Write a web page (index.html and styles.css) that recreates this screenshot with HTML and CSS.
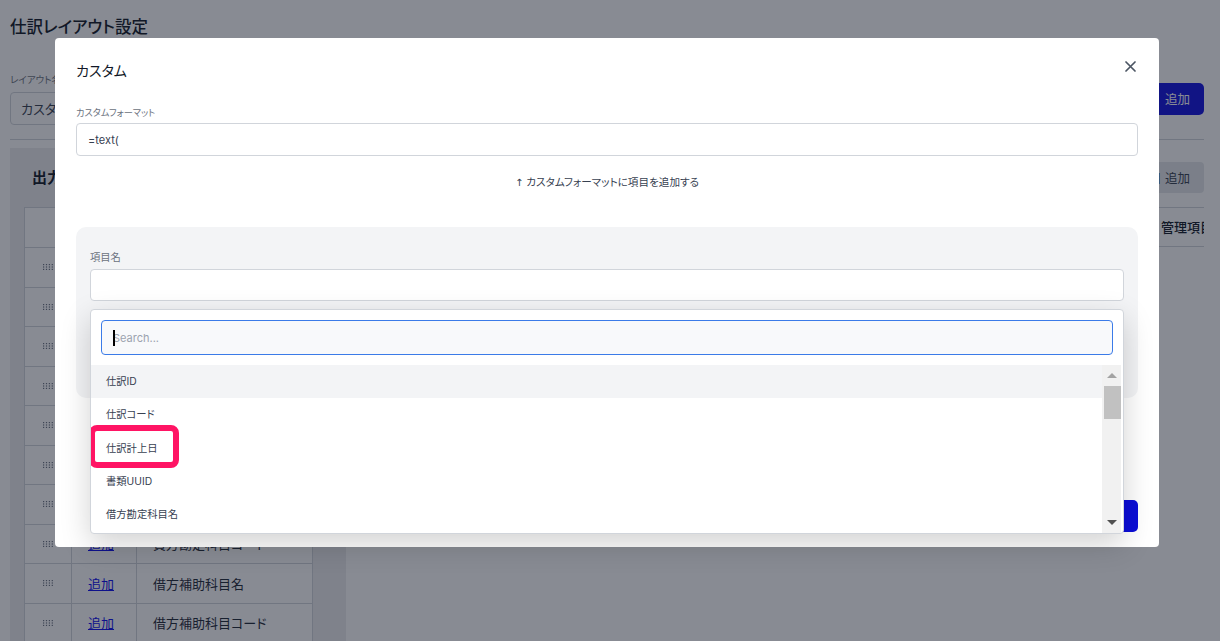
FILE: index.html
```html
<!DOCTYPE html>
<html lang="ja">
<head>
<meta charset="utf-8">
<title>仕訳レイアウト設定</title>
<link rel="stylesheet" href="styles.css">
</head>
<body>
<div class="page">
  <h1 class="page-title">仕訳レイアウト設定</h1>
  <div class="layout-row">
    <div class="layout-field">
      <label class="page-label">レイアウト名</label>
      <input class="page-input" value="カスタムレイアウト">
    </div>
    <button class="btn-primary">追加</button>
  </div>
  <hr class="divider">
  <div class="workspace">
    <section class="output-panel">
      <h2 class="panel-title">出力項目</h2>
      <table class="item-table">
        <colgroup><col class="c-handle"><col class="c-action"><col class="c-name"></colgroup>
        <thead><tr><th></th><th>操作</th><th>項目名</th></tr></thead>
        <tbody>
          <tr><td class="handle"><svg width="10" height="6" viewBox="0 0 10 6"><g fill="#6b7280"><rect x="0" y="0" width="1.2" height="1.2"/><rect x="2.9" y="0" width="1.2" height="1.2"/><rect x="5.8" y="0" width="1.2" height="1.2"/><rect x="8.7" y="0" width="1.2" height="1.2"/><rect x="0" y="2.4" width="1.2" height="1.2"/><rect x="2.9" y="2.4" width="1.2" height="1.2"/><rect x="5.8" y="2.4" width="1.2" height="1.2"/><rect x="8.7" y="2.4" width="1.2" height="1.2"/><rect x="0" y="4.8" width="1.2" height="1.2"/><rect x="2.9" y="4.8" width="1.2" height="1.2"/><rect x="5.8" y="4.8" width="1.2" height="1.2"/><rect x="8.7" y="4.8" width="1.2" height="1.2"/></g></svg></td><td><a href="#">追加</a></td><td>仕訳ID</td></tr>
          <tr><td class="handle"><svg width="10" height="6" viewBox="0 0 10 6"><g fill="#6b7280"><rect x="0" y="0" width="1.2" height="1.2"/><rect x="2.9" y="0" width="1.2" height="1.2"/><rect x="5.8" y="0" width="1.2" height="1.2"/><rect x="8.7" y="0" width="1.2" height="1.2"/><rect x="0" y="2.4" width="1.2" height="1.2"/><rect x="2.9" y="2.4" width="1.2" height="1.2"/><rect x="5.8" y="2.4" width="1.2" height="1.2"/><rect x="8.7" y="2.4" width="1.2" height="1.2"/><rect x="0" y="4.8" width="1.2" height="1.2"/><rect x="2.9" y="4.8" width="1.2" height="1.2"/><rect x="5.8" y="4.8" width="1.2" height="1.2"/><rect x="8.7" y="4.8" width="1.2" height="1.2"/></g></svg></td><td><a href="#">追加</a></td><td>仕訳コード</td></tr>
          <tr><td class="handle"><svg width="10" height="6" viewBox="0 0 10 6"><g fill="#6b7280"><rect x="0" y="0" width="1.2" height="1.2"/><rect x="2.9" y="0" width="1.2" height="1.2"/><rect x="5.8" y="0" width="1.2" height="1.2"/><rect x="8.7" y="0" width="1.2" height="1.2"/><rect x="0" y="2.4" width="1.2" height="1.2"/><rect x="2.9" y="2.4" width="1.2" height="1.2"/><rect x="5.8" y="2.4" width="1.2" height="1.2"/><rect x="8.7" y="2.4" width="1.2" height="1.2"/><rect x="0" y="4.8" width="1.2" height="1.2"/><rect x="2.9" y="4.8" width="1.2" height="1.2"/><rect x="5.8" y="4.8" width="1.2" height="1.2"/><rect x="8.7" y="4.8" width="1.2" height="1.2"/></g></svg></td><td><a href="#">追加</a></td><td>仕訳計上日</td></tr>
          <tr><td class="handle"><svg width="10" height="6" viewBox="0 0 10 6"><g fill="#6b7280"><rect x="0" y="0" width="1.2" height="1.2"/><rect x="2.9" y="0" width="1.2" height="1.2"/><rect x="5.8" y="0" width="1.2" height="1.2"/><rect x="8.7" y="0" width="1.2" height="1.2"/><rect x="0" y="2.4" width="1.2" height="1.2"/><rect x="2.9" y="2.4" width="1.2" height="1.2"/><rect x="5.8" y="2.4" width="1.2" height="1.2"/><rect x="8.7" y="2.4" width="1.2" height="1.2"/><rect x="0" y="4.8" width="1.2" height="1.2"/><rect x="2.9" y="4.8" width="1.2" height="1.2"/><rect x="5.8" y="4.8" width="1.2" height="1.2"/><rect x="8.7" y="4.8" width="1.2" height="1.2"/></g></svg></td><td><a href="#">追加</a></td><td>書類UUID</td></tr>
          <tr><td class="handle"><svg width="10" height="6" viewBox="0 0 10 6"><g fill="#6b7280"><rect x="0" y="0" width="1.2" height="1.2"/><rect x="2.9" y="0" width="1.2" height="1.2"/><rect x="5.8" y="0" width="1.2" height="1.2"/><rect x="8.7" y="0" width="1.2" height="1.2"/><rect x="0" y="2.4" width="1.2" height="1.2"/><rect x="2.9" y="2.4" width="1.2" height="1.2"/><rect x="5.8" y="2.4" width="1.2" height="1.2"/><rect x="8.7" y="2.4" width="1.2" height="1.2"/><rect x="0" y="4.8" width="1.2" height="1.2"/><rect x="2.9" y="4.8" width="1.2" height="1.2"/><rect x="5.8" y="4.8" width="1.2" height="1.2"/><rect x="8.7" y="4.8" width="1.2" height="1.2"/></g></svg></td><td><a href="#">追加</a></td><td>借方勘定科目名</td></tr>
          <tr><td class="handle"><svg width="10" height="6" viewBox="0 0 10 6"><g fill="#6b7280"><rect x="0" y="0" width="1.2" height="1.2"/><rect x="2.9" y="0" width="1.2" height="1.2"/><rect x="5.8" y="0" width="1.2" height="1.2"/><rect x="8.7" y="0" width="1.2" height="1.2"/><rect x="0" y="2.4" width="1.2" height="1.2"/><rect x="2.9" y="2.4" width="1.2" height="1.2"/><rect x="5.8" y="2.4" width="1.2" height="1.2"/><rect x="8.7" y="2.4" width="1.2" height="1.2"/><rect x="0" y="4.8" width="1.2" height="1.2"/><rect x="2.9" y="4.8" width="1.2" height="1.2"/><rect x="5.8" y="4.8" width="1.2" height="1.2"/><rect x="8.7" y="4.8" width="1.2" height="1.2"/></g></svg></td><td><a href="#">追加</a></td><td>借方勘定科目コード</td></tr>
          <tr><td class="handle"><svg width="10" height="6" viewBox="0 0 10 6"><g fill="#6b7280"><rect x="0" y="0" width="1.2" height="1.2"/><rect x="2.9" y="0" width="1.2" height="1.2"/><rect x="5.8" y="0" width="1.2" height="1.2"/><rect x="8.7" y="0" width="1.2" height="1.2"/><rect x="0" y="2.4" width="1.2" height="1.2"/><rect x="2.9" y="2.4" width="1.2" height="1.2"/><rect x="5.8" y="2.4" width="1.2" height="1.2"/><rect x="8.7" y="2.4" width="1.2" height="1.2"/><rect x="0" y="4.8" width="1.2" height="1.2"/><rect x="2.9" y="4.8" width="1.2" height="1.2"/><rect x="5.8" y="4.8" width="1.2" height="1.2"/><rect x="8.7" y="4.8" width="1.2" height="1.2"/></g></svg></td><td><a href="#">追加</a></td><td>貸方勘定科目名</td></tr>
          <tr><td class="handle"><svg width="10" height="6" viewBox="0 0 10 6"><g fill="#6b7280"><rect x="0" y="0" width="1.2" height="1.2"/><rect x="2.9" y="0" width="1.2" height="1.2"/><rect x="5.8" y="0" width="1.2" height="1.2"/><rect x="8.7" y="0" width="1.2" height="1.2"/><rect x="0" y="2.4" width="1.2" height="1.2"/><rect x="2.9" y="2.4" width="1.2" height="1.2"/><rect x="5.8" y="2.4" width="1.2" height="1.2"/><rect x="8.7" y="2.4" width="1.2" height="1.2"/><rect x="0" y="4.8" width="1.2" height="1.2"/><rect x="2.9" y="4.8" width="1.2" height="1.2"/><rect x="5.8" y="4.8" width="1.2" height="1.2"/><rect x="8.7" y="4.8" width="1.2" height="1.2"/></g></svg></td><td><a href="#">追加</a></td><td>貸方勘定科目コード</td></tr>
          <tr><td class="handle"><svg width="10" height="6" viewBox="0 0 10 6"><g fill="#6b7280"><rect x="0" y="0" width="1.2" height="1.2"/><rect x="2.9" y="0" width="1.2" height="1.2"/><rect x="5.8" y="0" width="1.2" height="1.2"/><rect x="8.7" y="0" width="1.2" height="1.2"/><rect x="0" y="2.4" width="1.2" height="1.2"/><rect x="2.9" y="2.4" width="1.2" height="1.2"/><rect x="5.8" y="2.4" width="1.2" height="1.2"/><rect x="8.7" y="2.4" width="1.2" height="1.2"/><rect x="0" y="4.8" width="1.2" height="1.2"/><rect x="2.9" y="4.8" width="1.2" height="1.2"/><rect x="5.8" y="4.8" width="1.2" height="1.2"/><rect x="8.7" y="4.8" width="1.2" height="1.2"/></g></svg></td><td><a href="#">追加</a></td><td>借方補助科目名</td></tr>
          <tr><td class="handle"><svg width="10" height="6" viewBox="0 0 10 6"><g fill="#6b7280"><rect x="0" y="0" width="1.2" height="1.2"/><rect x="2.9" y="0" width="1.2" height="1.2"/><rect x="5.8" y="0" width="1.2" height="1.2"/><rect x="8.7" y="0" width="1.2" height="1.2"/><rect x="0" y="2.4" width="1.2" height="1.2"/><rect x="2.9" y="2.4" width="1.2" height="1.2"/><rect x="5.8" y="2.4" width="1.2" height="1.2"/><rect x="8.7" y="2.4" width="1.2" height="1.2"/><rect x="0" y="4.8" width="1.2" height="1.2"/><rect x="2.9" y="4.8" width="1.2" height="1.2"/><rect x="5.8" y="4.8" width="1.2" height="1.2"/><rect x="8.7" y="4.8" width="1.2" height="1.2"/></g></svg></td><td><a href="#">追加</a></td><td>借方補助科目コード</td></tr>
        </tbody>
      </table>
    </section>
    <section class="layout-panel">
      <div class="layout-toolbar"><button class="btn-gray">項目 追加</button></div>
      <div class="layout-scroll">
        <div class="layout-head">
          <div class="lh-cell lh-no">No</div>
          <div class="lh-cell lh-name">項目名</div>
          <div class="lh-cell lh-format">フォーマット</div>
          <div class="lh-cell lh-kind">区分</div>
          <div class="lh-cell lh-manage">管理項目名</div>
        </div>
      </div>
    </section>
  </div>
</div>

<div class="overlay">
  <div class="modal">
    <div class="modal-head">
      <h3 class="modal-title">カスタム</h3>
      <button class="close-btn" aria-label="閉じる">
        <svg width="11" height="11" viewBox="0 0 11 11"><path d="M1 1 L10 10 M10 1 L1 10" stroke="#4b5563" stroke-width="1.7" stroke-linecap="round" fill="none"/></svg>
      </button>
    </div>
    <label class="field-label first">カスタムフォーマット</label>
    <input class="text-input" value="=text(">
    <p class="helper"><span class="arrow">↑</span> カスタムフォーマットに項目を追加する</p>

    <div class="item-box">
      <div class="select-field">
        <label class="field-label">項目名</label>
        <div class="text-input select-trigger"></div>
        <div class="dropdown">
          <div class="search-box">
            <input class="search-input" placeholder="Search...">
            <span class="caret"></span>
          </div>
          <div class="option-area">
            <ul class="options">
              <li class="option active">仕訳ID</li>
              <li class="option">仕訳コード</li>
              <li class="option">仕訳計上日<span class="annot"></span></li>
              <li class="option">書類UUID</li>
              <li class="option">借方勘定科目名</li>
              <li class="option">借方勘定科目コード</li>
              <li class="option">借方補助科目名</li>
            </ul>
            <div class="scrollbar">
              <div class="sb-btn"><span class="tri-up"></span></div>
              <div class="sb-thumb"></div>
              <div class="sb-track"></div>
              <div class="sb-btn"><span class="tri-down"></span></div>
            </div>
          </div>
        </div>
      </div>
      <div class="sub-field">
        <label class="field-label">表示形式</label>
        <div class="text-input"></div>
      </div>
    </div>

    <div class="modal-foot">
      <button class="btn-submit">追加</button>
    </div>
  </div>
</div>
</body>
</html>
```

FILE: styles.css
```css
html, body {
  margin: 0;
  padding: 0;
  overflow: hidden;
  background: #ffffff;
}
body {
  font-family: Inter, "Noto Sans CJK JP", sans-serif;
  font-feature-settings: "palt";
  color: #1f2937;
}
button, input {
  font-family: inherit;
  font-feature-settings: "palt";
}

/* ---------- background page ---------- */
.page {
  padding: 14px 16px 0 10px;
}
.page-title {
  margin: 0;
  font-size: 16.5px;
  line-height: 26px;
  font-weight: 500;
  color: #111827;
}
.layout-row {
  margin-top: 32px;
  display: flex;
  justify-content: space-between;
  align-items: center;
}
.layout-field {
  display: flex;
  flex-direction: column;
}
.page-label {
  font-size: 9.5px;
  line-height: 15px;
  color: #6b7280;
}
.page-input {
  margin-top: 5px;
  width: 300px;
  height: 33px;
  box-sizing: border-box;
  border: 1px solid #d1d5db;
  border-radius: 4px;
  padding: 0 10px;
  font-size: 13px;
  color: #374151;
}
.btn-primary {
  height: 32px;
  padding: 0 14px;
  border: none;
  border-radius: 5px;
  background: #1010e0;
  color: #ffffff;
  font-size: 12.5px;
}
.divider {
  margin: 14px 0 0;
  border: none;
  border-top: 1px solid #d1d5db;
}
.workspace {
  margin-top: 8px;
  display: flex;
  align-items: flex-start;
}
.output-panel {
  width: 336px;
  box-sizing: border-box;
  background: #ececef;
  padding: 19px 34px 40px 14px;
}
.panel-title {
  margin: 0 0 18px 8px;
  font-size: 15px;
  line-height: 22px;
  font-weight: 700;
  color: #111827;
}
.item-table {
  border-collapse: collapse;
  background: #ffffff;
  width: 288px;
  table-layout: fixed;
  font-size: 13px;
}
.c-handle { width: 47px; }
.c-action { width: 65px; }
.c-name { width: 176px; }
.item-table th,
.item-table td {
  border: 1px solid #d1d5db;
  padding: 0;
  text-align: left;
  white-space: nowrap;
}
.item-table th {
  height: 39px;
  font-weight: 500;
  color: #111827;
  padding-left: 16px;
}
.item-table th:first-child { padding-left: 0; }
.item-table td {
  height: 38.5px;
  color: #1f2937;
}
.item-table td:nth-child(2) { padding-left: 16px; }
.item-table td:nth-child(3) { padding-left: 16px; }
.item-table td.handle {
  text-align: center;
  line-height: 0;
}
.item-table a {
  color: #0a0aee;
  text-decoration: underline;
}

.layout-panel {
  flex: 1;
  min-width: 0;
  padding: 14px 0 0 16px;
}
.layout-toolbar {
  display: flex;
  justify-content: flex-end;
}
.btn-gray {
  height: 31px;
  padding: 0 14px;
  border: none;
  border-radius: 4px;
  background: #e5e7eb;
  color: #374151;
  font-size: 12.5px;
}
.layout-scroll {
  margin-top: 14px;
  overflow: hidden;
}
.layout-head {
  display: flex;
  width: 1000px;
  height: 40px;
  box-sizing: border-box;
  border-top: 1px solid #d1d5db;
  border-bottom: 1px solid #d1d5db;
}
.lh-cell {
  flex: none;
  box-sizing: border-box;
  padding-left: 16px;
  font-size: 13px;
  line-height: 38px;
  font-weight: 500;
  color: #111827;
  white-space: nowrap;
}
.lh-no { width: 60px; }
.lh-name { width: 260px; }
.lh-format { width: 260px; }
.lh-kind { width: 203px; }
.lh-manage { width: 200px; }

/* ---------- modal ---------- */
.overlay {
  position: fixed;
  inset: 0;
  background: rgba(17, 24, 39, 0.5);
  padding: 38px 0 0 55px;
}
.modal {
  width: 1104px;
  box-sizing: border-box;
  background: #ffffff;
  border-radius: 4px;
  padding: 23px 21px 15px;
}
.modal-head {
  display: flex;
  justify-content: space-between;
  align-items: flex-start;
}
.modal-title {
  margin: 0;
  font-size: 14px;
  line-height: 20px;
  font-weight: 400;
  color: #111827;
}
.close-btn {
  margin: 0 2px 0 0;
  padding: 0;
  border: none;
  background: none;
  width: 11px;
  height: 11px;
  line-height: 0;
}
.field-label {
  display: block;
  font-size: 10.3px;
  line-height: 15px;
  color: #6b7280;
}
.field-label.first {
  margin-top: 24px;
  font-size: 9.2px;
}
.text-input {
  display: block;
  margin-top: 3px;
  width: 100%;
  height: 33px;
  box-sizing: border-box;
  border: 1px solid #d1d5db;
  border-radius: 4px;
  background: #ffffff;
  padding: 0 11px;
  font-size: 11px;
  color: #374151;
}
.helper {
  margin: 18px 0 0;
  text-align: center;
  font-size: 10.6px;
  line-height: 17px;
  color: #374151;
}
.helper .arrow {
  font-family: "DejaVu Sans", sans-serif;
  font-size: 10px;
}
.item-box {
  margin-top: 36px;
  background: #f3f4f6;
  border-radius: 10px;
  padding: 23px 14px 32px;
}
.select-field {
  position: relative;
}
.select-field .text-input {
  margin-top: 4px;
  height: 32px;
}
.sub-field {
  margin-top: 14px;
}
.sub-field .text-input {
  margin-top: 4px;
  height: 32px;
}
.dropdown {
  position: absolute;
  top: calc(100% + 8px);
  left: 0;
  right: 0;
  height: 225px;
  box-sizing: border-box;
  background: #ffffff;
  border: 1px solid #d1d5db;
  border-radius: 4px;
  box-shadow: 0 10px 30px rgba(0, 0, 0, 0.18);
  z-index: 5;
  display: flex;
  flex-direction: column;
}
.search-box {
  position: relative;
  margin: 10px 10px 0;
}
.search-input {
  display: block;
  width: 100%;
  height: 35px;
  box-sizing: border-box;
  border: 1px solid #3b7be8;
  border-radius: 4px;
  background: #f8f9fb;
  padding: 0 11px;
  font-size: 11px;
  color: #374151;
  outline: none;
}
.search-input::placeholder {
  color: #9ca3af;
}
.caret {
  position: absolute;
  left: 12px;
  top: 10px;
  width: 1.5px;
  height: 16px;
  background: #000000;
}
.option-area {
  margin-top: 10px;
  flex: 1;
  min-height: 0;
  display: flex;
}
.options {
  flex: 1;
  margin: 0;
  padding: 0;
  list-style: none;
  overflow: hidden;
}
.option {
  position: relative;
  height: 33.3px;
  line-height: 33.3px;
  padding-left: 15px;
  font-size: 10.3px;
  color: #374151;
}
.option.active {
  background: #f3f4f6;
}
.annot {
  position: absolute;
  left: -2px;
  top: -6.5px;
  width: 90px;
  height: 43px;
  box-sizing: border-box;
  border: 6.5px solid #ff1464;
  border-radius: 8px;
}
.scrollbar {
  width: 19px;
  margin-right: 2px;
  background: #f1f1f1;
  display: flex;
  flex-direction: column;
}
.sb-btn {
  height: 21px;
  display: flex;
  align-items: center;
  justify-content: center;
}
.tri-up {
  width: 0;
  height: 0;
  border-left: 5px solid transparent;
  border-right: 5px solid transparent;
  border-bottom: 5px solid #a3a3a3;
}
.tri-down {
  width: 0;
  height: 0;
  border-left: 5px solid transparent;
  border-right: 5px solid transparent;
  border-top: 5px solid #505050;
}
.sb-thumb {
  height: 33px;
  margin-left: 2px;
  background: #c1c1c1;
}
.sb-track {
  flex: 1;
}
.modal-foot {
  margin-top: 102px;
  display: flex;
  justify-content: flex-end;
}
.btn-submit {
  height: 32px;
  width: 80px;
  border: none;
  border-radius: 5px;
  background: #0c0ed8;
  color: #ffffff;
  font-size: 12px;
}
```
